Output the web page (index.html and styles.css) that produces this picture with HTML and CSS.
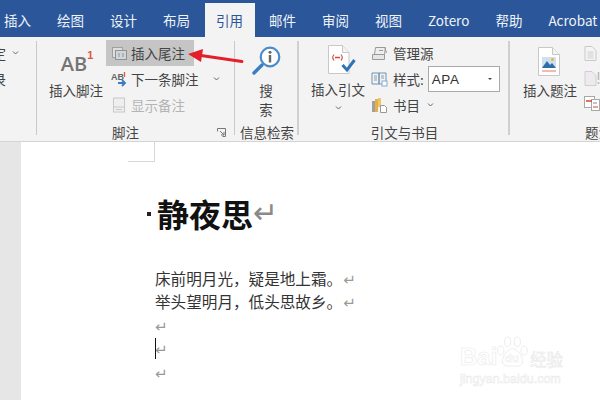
FILE: index.html
```html
<!DOCTYPE html>
<html lang="zh">
<head>
<meta charset="utf-8">
<title>引用</title>
<link rel="stylesheet" href="styles.css">
</head>
<body>
<div class="app">
  <nav class="tabs">
    <span class="tab">插入</span><span class="tab">绘图</span><span class="tab">设计</span><span class="tab">布局</span><span class="tab active">引用</span><span class="tab">邮件</span><span class="tab">审阅</span><span class="tab">视图</span><span class="tab">Zotero</span><span class="tab">帮助</span><span class="tab">Acrobat</span>
  </nav>
  <section class="ribbon">
    <div class="group g-prev">
      <div class="prev-row"><span class="cut">定</span><svg class="chev" viewBox="0 0 7 4"><path d="M1 .5l2.5 2.5L6 .5"/></svg></div>
      <div class="prev-row"><span class="cut">录</span></div>
    </div>
    <div class="group g-foot">
      <div class="group-body">
        <div class="big b-foot">
          <div class="ab-icon"><span class="ab">AB</span><span class="sup">1</span></div>
          <span class="big-label">插入脚注</span>
        </div>
        <div class="stack">
          <div class="row hl">
            <svg class="ico" viewBox="0 0 17 16"><rect x="1.500" y="2.500" width="10" height="10" fill="#dedede" stroke="#a0a0a0"/><rect x="4.500" y="5.500" width="11" height="9" fill="#d4d4d4" stroke="#929292"/><path d="M8 8v4M12 8v4" stroke="#6f9fce"/></svg>
            <span>插入尾注</span>
          </div>
          <div class="row">
            <svg class="ico" viewBox="0 0 17 16"><text x="0" y="9" class="ab-small">AB</text><path d="M13.500 1v5" stroke="#e0563f" stroke-width="1.300"/><path d="M7 12h7M11 9l3 3-3 3" stroke="#3b7cc0" stroke-width="1.800" fill="none"/></svg>
            <span class="row-text">下一条脚注</span>
            <svg class="chev c-next" viewBox="0 0 7 4"><path d="M1 .5l2.5 2.5L6 .5"/></svg>
          </div>
          <div class="row off">
            <svg class="ico" viewBox="0 0 17 16"><rect x="2.500" y="1" width="11" height="14" fill="#efefef" stroke="#c8c8c8"/><path d="M3 10h10M5 12.500h6" stroke="#c8c8c8"/></svg>
            <span>显示备注</span>
          </div>
        </div>
      </div>
      <div class="group-label l-foot"><span>脚注</span><svg class="launch" viewBox="0 0 9 9"><path d="M.5 3.500v-3h8v8h-3M3 3l4 4M7 4v3H4" fill="none" stroke="#777"/></svg></div>
    </div>
    <div class="group g-search">
      <div class="group-body col">
        <svg class="search-ico" viewBox="0 0 32 34"><path d="M12 21L4 29" stroke="#3a7fc1" stroke-width="3.400" stroke-linecap="round"/><circle cx="20" cy="13" r="9.300" fill="#fff" stroke="#4a8cc9" stroke-width="2.200"/><circle cx="20" cy="8.300" r="1.500" fill="#666"/><path d="M20 11v7.500" stroke="#666" stroke-width="2.400"/></svg>
        <span class="big-label tall">搜<br>索</span>
      </div>
      <div class="group-label">信息检索</div>
    </div>
    <div class="group g-cite">
      <div class="group-body">
        <div class="big b-cite">
          <svg class="cite-ico" viewBox="0 0 28 30"><path d="M.5 1.500h14l6.500 7V29.500H.5z" fill="#fff" stroke="#c8c8c8"/><path d="M14.500 1.500v7h6.500" fill="#f3f3f3" stroke="#c8c8c8"/><path d="M6 10.500q-2.500 3 0 6M13 10.500q2.500 3 0 6" fill="none" stroke="#d0483a" stroke-width="1.100"/><path d="M7 13.500h5" stroke="#d0483a" stroke-width="1.500"/><path d="M14.500 21l4.500 5 7.500-10" fill="none" stroke="#2e75b6" stroke-width="3"/></svg>
          <span class="big-label">插入引文</span>
          <svg class="chev c-cite" viewBox="0 0 7 4"><path d="M1 .5l2.5 2.5L6 .5"/></svg>
        </div>
        <div class="stack s-cite">
          <div class="row">
            <svg class="ico" viewBox="0 0 17 16"><path d="M4.500 2.500h10l-1 7h-10z" fill="#eee" stroke="#9a9a9a"/><path d="M1.500 9.500h12v5h-12z" fill="#e6e6e6" stroke="#9a9a9a"/><path d="M8 5.500h4M14 3l1.500 5" stroke="#9a9a9a"/></svg>
            <span>管理源</span>
          </div>
          <div class="row">
            <svg class="ico" viewBox="0 0 17 16"><path d="M1 2h7v11H1zM8 2h7v11H8z" fill="#eef3f8" stroke="#6f93b5"/><path d="M3 5h3M3 7h3M3 9h3M10 5h3M10 7h3" stroke="#9a9a9a"/><rect x="11" y="10" width="5" height="5" fill="#fff" stroke="#8aa9c8"/></svg>
            <span>样式:</span>
            <div class="select"><span>APA</span><i class="caret"></i></div>
          </div>
          <div class="row">
            <svg class="ico" viewBox="0 0 17 16"><rect x="1" y="4" width="3" height="11" fill="#a0a0a0"/><rect x="4" y="2" width="3" height="13" fill="#e3b04b"/><rect x="7" y="1" width="3" height="9" fill="#f0c665"/><path d="M9.500 8.500h4l2 2v5h-6z" fill="#fff" stroke="#999"/></svg>
            <span>书目</span>
            <svg class="chev c-book" viewBox="0 0 7 4"><path d="M1 .5l2.5 2.5L6 .5"/></svg>
          </div>
        </div>
      </div>
      <div class="group-label">引文与书目</div>
    </div>
    <div class="group g-cap">
      <div class="group-body">
        <div class="big b-cap">
          <svg class="cap-ico" viewBox="0 0 22 29"><path d="M.5.5h14l7 7v21H.5z" fill="#fff" stroke="#c8c8c8"/><path d="M14.500.5v7h7" fill="#f3f3f3" stroke="#c8c8c8"/><rect x="4" y="10" width="14" height="11" fill="#cfe0f0"/><path d="M4 21l5-7 3 4 2-2 4 5z" fill="#2f6fa8"/><circle cx="14.500" cy="12.500" r="1.500" fill="#f0b040"/><path d="M4 24h14" stroke="#e8775a"/></svg>
          <span class="big-label">插入题注</span>
        </div>
        <div class="stack s-cap">
          <svg class="cap-small" viewBox="0 0 15 15"><path d="M.5.5h7l4 4v10H.5z" fill="#f4f4f4" stroke="#c9c9c9"/><path d="M3 6h6M3 8h6M3 10h6M3 12h6" stroke="#cfcfcf"/></svg>
          <svg class="cap-small" viewBox="0 0 15 15"><path d="M.5.5h7l4 4v10H.5z" fill="#eeeaf0" stroke="#cfcfcf"/><path d="M14 1v8M14 11v2" stroke="#b9b9b9" stroke-width="1.500"/></svg>
          <svg class="cap-small" viewBox="0 0 16 15"><rect x=".5" y=".5" width="10" height="11" fill="#fff" stroke="#a8a8a8"/><rect x="7.500" y="3.500" width="8" height="11" fill="#fff" stroke="#a8a8a8"/><path d="M2 5h6" stroke="#d9442b" stroke-width="1.500"/><path d="M9 11h5" stroke="#d9442b"/><path d="M9 7h4" stroke="#888"/></svg>
        </div>
      </div>
      <div class="group-label l-cap">题注</div>
    </div>
  </section>
  <main class="workspace">
    <aside class="gutter"></aside>
    <div class="page">
      <div class="crop"></div>
      <div class="content">
        <h1 class="title"><i class="bullet"></i>静夜思<span class="mark">↵</span></h1>
        <p class="line">床前明月光，疑是地上霜。<span class="pilcrow">↵</span></p>
        <p class="line">举头望明月，低头思故乡。<span class="pilcrow">↵</span></p>
        <p class="line"><span class="pilcrow first">↵</span></p>
        <p class="line"><span class="cursor"></span><span class="pilcrow first">↵</span></p>
        <p class="line"><span class="pilcrow first">↵</span></p>
      </div>
    </div>
  </main>
  <svg class="arrow" viewBox="0 0 60 18"><path d="M55 12.500L14 6.500" stroke="#e3202a" stroke-width="2.800" stroke-linecap="round"/><path d="M1 5L16 0L14 13z" fill="#e3202a"/></svg>
  <div class="watermark">
    <div class="wm-top">
      <span class="wm-bai">Bai</span>
      <svg class="paw" viewBox="0 0 32 34"><g fill="#fff" stroke="#ebebeb"><ellipse cx="4" cy="15" rx="3.200" ry="4.500"/><ellipse cx="11" cy="6" rx="3.200" ry="5"/><ellipse cx="21" cy="6" rx="3.200" ry="5"/><ellipse cx="28" cy="15" rx="3.200" ry="4.500"/><path d="M16 13c5 0 12 9 10 15-2 4-7 3-10 3s-8 1-10-3c-2-6 5-15 10-15z"/></g><text x="8" y="27" class="wm-du">du</text></svg>
      <span class="wm-jy">经验</span>
    </div>
    <div class="wm-url">jingyan.baidu.com</div>
  </div>
</div>
</body>
</html>
```
FILE: styles.css
```css
* { box-sizing: border-box; }
html, body { margin: 0; padding: 0; }
body { width: 600px; height: 400px; overflow: hidden; background: #fff; font-family: "Noto Sans CJK SC", "Liberation Sans", sans-serif; color: #444; }
p, h1 { margin: 0; }
.app { position: relative; width: 600px; height: 400px; overflow: hidden; display: flex; flex-direction: column; }

.tabs { flex: none; height: 37px; background: #2b579a; display: flex; align-items: flex-end; margin-left: -9px; width: 620px; white-space: nowrap; }
.tab { height: 34px; line-height: 34px; padding: 0 13px; color: #f0f3f8; font-size: 13.5px; }
.tab.active { background: #f3f3f3; color: #2b579a; padding: 0 11.5px; margin: 0 1.5px; }

.ribbon { flex: none; height: 105px; background: #f3f3f3; border-bottom: 1px solid #d4d4d4; display: flex; font-size: 13.5px; color: #444; }
.group { position: relative; display: flex; flex-direction: column; flex: none; height: 104px; padding-top: 3px; }
.group::after { content: ""; position: absolute; right: 0; top: 4px; bottom: 6px; width: 1px; background: #c9c9c9; }
.group-body { display: flex; height: 84px; }
.group-label { font-size: 13.5px; line-height: 16px; text-align: center; white-space: nowrap; }
.g-prev { width: 37px; }
.g-foot { width: 198px; }
.g-search { width: 64px; }
.g-cite { width: 211px; }
.g-cap { width: 90px; }
.g-cap::after { display: none; }
.g-search::after { width: 2px; background: #d0d0d0; }
.g-cite::after { width: 2px; background: #cfcfcf; }

.prev-row { height: 26px; display: flex; align-items: center; overflow: hidden; }
.cut { display: block; width: 6px; overflow: hidden; direction: rtl; font-size: 13.5px; line-height: 18px; }
.prev-row .chev { margin-left: 6px; }

.chev { width: 7px; height: 4px; fill: none; stroke: #666; stroke-width: 1; flex: none; }

.big { display: flex; flex-direction: column; align-items: center; }
.big-label { font-size: 13.5px; line-height: 18px; white-space: nowrap; }
.b-foot { width: 69px; padding: 10px 0 0 9px; }
.ab-icon { height: 31px; display: flex; align-items: flex-start; margin-left: 2px; }
.ab { font: 600 20px/24px "Open Sans", "Liberation Sans", sans-serif; color: #757575; margin-top: 2px; }
.sup { font: bold 11px/11px "Liberation Sans", sans-serif; color: #dc5a3c; }

.stack { display: flex; flex-direction: column; }
.row { height: 26px; display: flex; align-items: center; padding-left: 5px; white-space: nowrap; }
.row .ico { width: 17px; height: 16px; flex: none; margin-right: 3px; }
.hl { width: 88px; background: #c5c5c5; }
.off { color: #b4b4b4; }
.c-next { margin-left: 14px; }
.ab-small { font: bold 9px "Liberation Sans", sans-serif; fill: #666; }
.launch { position: absolute; width: 9px; height: 9px; right: 9px; top: 4px; }
.l-foot { position: relative; padding-left: 75px; text-align: left; }

.g-search .col { flex-direction: column; align-items: center; padding-top: 4px; padding-right: 2px; }
.search-ico { width: 32px; height: 34px; margin-bottom: 3px; }
.tall { line-height: 18.500px; text-align: center; white-space: normal; }

.b-cite { width: 68px; padding: 4px 0 0 10px; }
.cite-ico { width: 28px; height: 30px; margin: 0 0 6px 8px; }
.c-cite { margin-top: 8px; }
.s-cite .row { padding-left: 4px; }
.s-cite .row .ico { margin-right: 5px; }
.select { width: 72px; height: 26px; margin-left: 4px; background: #fff; border: 1px solid #a9a9a9; display: flex; align-items: center; justify-content: space-between; padding: 0 7px 0 3px; font: 13.500px "Liberation Sans", sans-serif; letter-spacing: .6px; color: #333; }
.caret { width: 0; height: 0; border: 2px solid transparent; border-top: 2.500px solid #444; border-bottom: 0; }
.c-book { margin-left: 7px; }

.b-cap { width: 67px; padding-top: 7px; margin-left: 9px; }
.cap-ico { width: 22px; height: 29px; margin-bottom: 5px; margin-right: 2px; }
.s-cap { padding: 6px 0 0 3px; gap: 10px; }
.cap-small { width: 16px; height: 15px; display: block; }
.l-cap { text-align: left; padding-left: 75px; }

.workspace { flex: 1; display: flex; min-height: 0; }
.gutter { width: 21px; flex: none; background: #e6e6e6; }
.page { flex: 1; background: #fff; position: relative; }
.crop { position: absolute; left: 107px; top: 0; width: 27px; height: 20px; border-right: 1px solid #d8d8d8; border-bottom: 1px solid #d8d8d8; }
.content { padding: 50px 0 0 134px; color: #000; }
.title { font-size: 32px; line-height: 44px; font-weight: 700; color: #111; height: 76px; margin: -1px 0 0 -8px; display: flex; align-items: flex-start; }
.bullet { width: 4px; height: 4px; margin: 21px 6px 0 0; background: #222; flex: none; }
.mark { font: 400 30px/44px "DejaVu Sans", sans-serif; color: #8a8a8a; }
.line { font-size: 15.600px; line-height: 23.400px; height: 23.400px; color: #333; white-space: nowrap; position: relative; }
.pilcrow { font: 400 15px/20px "DejaVu Sans", sans-serif; color: #9a9a9a; margin-left: 1px; }
.pilcrow.first { margin-left: 0; }
.cursor { position: absolute; left: 0; top: 1px; width: 1px; height: 21px; background: #111; }

.arrow { position: absolute; left: 187px; top: 49px; width: 60px; height: 18px; }
.watermark { position: absolute; left: 460px; top: 335px; width: 110px; }
.wm-top { display: flex; align-items: flex-end; height: 34px; }
.wm-bai { font: bold 24px/24px "Liberation Sans", sans-serif; color: #fff; -webkit-text-stroke: .6px #ebebeb; width: 37px; }
.paw { width: 31px; height: 33px; flex: none; margin-bottom: 0; }
.wm-du { font: bold 12px "Liberation Sans", sans-serif; fill: #fff; stroke: #ebebeb; stroke-width: .5px; }
.wm-jy { font-size: 16.500px; line-height: 20px; color: #fff; -webkit-text-stroke: .6px #e8e8e8; margin-left: 2px; }
.wm-url { font: 12.500px/14px "Liberation Sans", sans-serif; color: #fff; -webkit-text-stroke: .5px #e8e8e8; white-space: nowrap; margin-top: 3px; }
```
